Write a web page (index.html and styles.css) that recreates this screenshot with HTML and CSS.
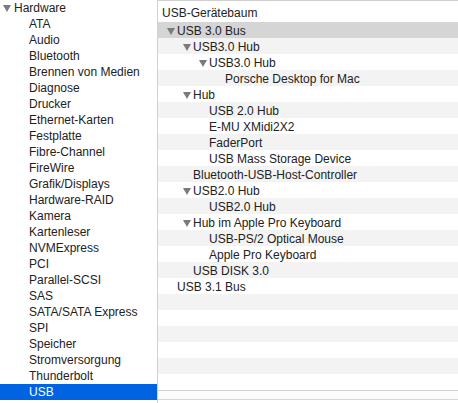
FILE: index.html
```html
<!DOCTYPE html>
<html>
<head>
<meta charset="utf-8">
<link rel="stylesheet" href="styles.css">
</head>
<body>
<div class="app">
  <div class="sidebar">
    <div class="srow group"><span class="tri"></span>Hardware</div>
    <div class="srow">ATA</div>
    <div class="srow">Audio</div>
    <div class="srow">Bluetooth</div>
    <div class="srow">Brennen von Medien</div>
    <div class="srow">Diagnose</div>
    <div class="srow">Drucker</div>
    <div class="srow">Ethernet-Karten</div>
    <div class="srow">Festplatte</div>
    <div class="srow">Fibre-Channel</div>
    <div class="srow">FireWire</div>
    <div class="srow">Grafik/Displays</div>
    <div class="srow">Hardware-RAID</div>
    <div class="srow">Kamera</div>
    <div class="srow">Kartenleser</div>
    <div class="srow">NVMExpress</div>
    <div class="srow">PCI</div>
    <div class="srow">Parallel-SCSI</div>
    <div class="srow">SAS</div>
    <div class="srow">SATA/SATA Express</div>
    <div class="srow">SPI</div>
    <div class="srow">Speicher</div>
    <div class="srow">Stromversorgung</div>
    <div class="srow">Thunderbolt</div>
    <div class="srow selected">USB</div>
  </div>
  <div class="divider"></div>
  <div class="main">
    <div class="header">USB-Gerätebaum</div>
    <div class="tree">
      <div class="trow sel l0"><span class="tri"></span>USB 3.0 Bus</div>
      <div class="trow l1"><span class="tri"></span>USB3.0 Hub</div>
      <div class="trow l2"><span class="tri"></span>USB3.0 Hub</div>
      <div class="trow l3">Porsche Desktop for Mac</div>
      <div class="trow l1"><span class="tri"></span>Hub</div>
      <div class="trow l2">USB 2.0 Hub</div>
      <div class="trow l2">E-MU XMidi2X2</div>
      <div class="trow l2">FaderPort</div>
      <div class="trow l2">USB Mass Storage Device</div>
      <div class="trow l1">Bluetooth-USB-Host-Controller</div>
      <div class="trow l1"><span class="tri"></span>USB2.0 Hub</div>
      <div class="trow l2">USB2.0 Hub</div>
      <div class="trow l1"><span class="tri"></span>Hub im Apple Pro Keyboard</div>
      <div class="trow l2">USB-PS/2 Optical Mouse</div>
      <div class="trow l2">Apple Pro Keyboard</div>
      <div class="trow l1">USB DISK 3.0</div>
      <div class="trow l0">USB 3.1 Bus</div>
      <div class="trow"></div>
      <div class="trow"></div>
      <div class="trow"></div>
      <div class="trow"></div>
      <div class="trow"></div>
      <div class="trow"></div>
    </div>
    <div class="pathbar"></div>
  </div>
</div>
</body>
</html>
```

FILE: styles.css
```css
html, body {
  margin: 0;
  padding: 0;
  background: #ffffff;
}
body {
  font-family: "Liberation Sans", Arial, sans-serif;
  font-size: 12px;
  color: #222222;
  width: 458px;
  height: 403px;
  overflow: hidden;
}
.app {
  display: flex;
  height: 403px;
}
.sidebar {
  width: 157px;
  flex: none;
  background: #ffffff;
}
.srow {
  height: 16px;
  line-height: 17px;
  padding-left: 29px;
  white-space: nowrap;
}
.srow.group {
  padding-left: 3px;
  display: flex;
  align-items: center;
}
.srow.group .tri {
  margin-right: 3px;
}
.srow.selected {
  background: #0063e1;
  color: #ffffff;
}
.tri {
  display: inline-block;
  width: 0;
  height: 0;
  border-left: 4px solid transparent;
  border-right: 4px solid transparent;
  border-top: 7px solid #7b7b7b;
  flex: none;
}
.divider {
  width: 1px;
  flex: none;
  background: #d1d1d1;
}
.main {
  flex: 1;
  display: flex;
  flex-direction: column;
}
.header {
  height: 21px;
  line-height: 25px;
  overflow: hidden;
  border-top: 1px solid #d1d1d1;
  padding-left: 4px;
  white-space: nowrap;
}
.tree {
  display: flex;
  flex-direction: column;
}
.trow {
  box-sizing: border-box;
  height: 16px;
  padding-top: 3px;
  line-height: 17px;
  display: flex;
  align-items: center;
  white-space: nowrap;
}
.trow:nth-child(even) {
  background: #f3f3f3;
}
.trow.sel {
  background: #d5d5d5;
}
.trow .tri {
  margin-right: 2px;
  margin-left: -10px;
}
.l0 { padding-left: 19px; }
.l1 { padding-left: 35px; }
.l2 { padding-left: 51px; }
.l3 { padding-left: 67px; }
.pathbar {
  height: 8px;
  border-top: 1px solid #cfcfcf;
  border-bottom: 1px solid #d6d6d6;
  background: #fcfcfc;
}
```
